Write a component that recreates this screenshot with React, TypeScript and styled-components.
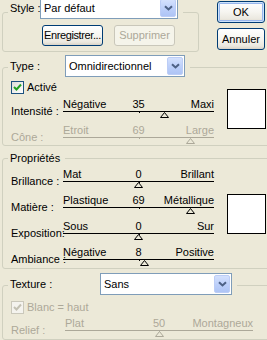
import React from 'react';
import styled, { createGlobalStyle } from 'styled-components';

const GlobalStyle = createGlobalStyle`
  html, body {
    margin: 0;
    padding: 0;
    background: #ece9d8;
  }
`;

const Dialog = styled.div`
  width: 267px;
  height: 340px;
  overflow: hidden;
  background: #ece9d8;
  color: #000;
  font: 11px/13px 'Liberation Sans', Arial, sans-serif;
  display: flex;
  flex-direction: column;
`;

const TopRow = styled.div`
  display: flex;
  align-items: flex-start;
  padding-left: 2px;
`;

const Frame = styled.div<{ $top: number; $width?: number }>`
  box-sizing: border-box;
  margin-top: ${({ $top }) => $top}px;
  border: 1px solid #d0d0bf;
  border-radius: 3px;
  display: flex;
  flex-direction: column;
  ${({ $width }) =>
    $width ? `width: ${$width}px;` : 'margin-left: 2px; margin-right: -10px;'}
`;

const FrameHead = styled.div<{ $lift: number }>`
  align-self: flex-start;
  display: flex;
  align-items: center;
  margin: -${({ $lift }) => $lift}px 0 0 5px;
  padding: 0 5px 0 2px;
  background: #ece9d8;
`;

const HeadLabel = styled.span<{ $w?: number }>`
  ${({ $w }) => ($w ? `width: ${$w}px;` : '')}
  white-space: nowrap;
`;

const Combo = styled.div<{ $w: number }>`
  box-sizing: border-box;
  width: ${({ $w }) => $w}px;
  height: 22px;
  border: 1px solid #7f9db9;
  background: #fff;
  display: flex;
  align-items: center;
  padding-left: 3px;
`;

const ComboText = styled.span`
  flex: 1;
  white-space: nowrap;
`;

const ComboArrow = styled.span`
  box-sizing: border-box;
  width: 16px;
  align-self: stretch;
  margin: 1px;
  border: 1px solid #bccdf6;
  border-radius: 2px;
  background: linear-gradient(180deg, #d4e1fd 0%, #bccffa 55%, #aec4f5 100%);
  display: flex;
  align-items: center;
  justify-content: center;
`;

const ButtonRow = styled.div`
  display: flex;
  gap: 11px;
  margin: 6px 0 0 39px;
  padding-bottom: 5px;
`;

const ButtonCol = styled.div`
  margin: 0 2px 0 auto;
  padding-top: 1px;
  display: flex;
  flex-direction: column;
  gap: 5px;
`;

const XPButton = styled.button<{ $w: number; $h: number; $default?: boolean; $tight?: boolean }>`
  box-sizing: border-box;
  width: ${({ $w }) => $w}px;
  height: ${({ $h }) => $h}px;
  padding: 0;
  font: inherit;
  letter-spacing: ${({ $tight }) => ($tight ? '-0.4px' : 'normal')};
  color: #000;
  white-space: nowrap;
  overflow: hidden;
  border: 1px solid #003c74;
  border-radius: 3px;
  background: linear-gradient(180deg, #ffffff 0%, #f6f5f0 50%, #ebe8df 85%, #d8d3c7 100%);
  box-shadow: ${({ $default }) =>
    $default ? 'inset 0 0 0 1px #cde3fb, inset 0 0 0 2px #98b6ec' : 'none'};

  &:disabled {
    border-color: #c9c7ba;
    color: #aca899;
    background: #f5f4ea;
  }
`;

const Body = styled.div<{ $pad: string }>`
  display: flex;
  align-items: flex-start;
  padding: ${({ $pad }) => $pad};
`;

const Column = styled.div`
  display: flex;
  flex-direction: column;
`;

const CheckRow = styled.label<{ $disabled?: boolean }>`
  display: flex;
  align-items: center;
  gap: 3px;
  height: 13px;
  color: ${({ $disabled }) => ($disabled ? '#aca899' : '#000')};
`;

const CheckBox = styled.span<{ $disabled?: boolean }>`
  box-sizing: border-box;
  width: 13px;
  height: 13px;
  border: 1px solid ${({ $disabled }) => ($disabled ? '#cac8bb' : '#1c5180')};
  background: ${({ $disabled }) =>
    $disabled ? '#f4f3ee' : 'linear-gradient(135deg, #dcdcd7 0%, #ffffff 100%)'};
  display: flex;
  align-items: center;
  justify-content: center;
`;

const SliderList = styled.div<{ $top: number }>`
  display: flex;
  flex-direction: column;
  gap: 6px;
  margin-top: ${({ $top }) => $top}px;
`;

const SliderRow = styled.div<{ $labelW: number; $trackW: number; $disabled?: boolean }>`
  display: grid;
  grid-template-columns: ${({ $labelW, $trackW }) => `${$labelW}px ${$trackW}px`};
  align-items: end;
  height: 20px;
  color: ${({ $disabled }) => ($disabled ? '#aca899' : '#000')};
`;

const RowLabel = styled.span`
  white-space: nowrap;
`;

const Track = styled.div`
  position: relative;
  height: 20px;
`;

const TrackLabels = styled.div`
  position: relative;
  display: grid;
  grid-template-columns: 1fr auto 1fr;
  height: 13px;
  border-bottom: 1px solid currentColor;
  white-space: nowrap;

  &::after {
    content: '';
    position: absolute;
    left: 50%;
    bottom: -2px;
    width: 1px;
    height: 1px;
    background: currentColor;
  }
`;

const MinText = styled.span`
  justify-self: start;
`;

const MaxText = styled.span`
  justify-self: end;
`;

const Thumb = styled.svg`
  position: absolute;
  top: 14px;
`;

const Swatch = styled.div<{ $top: number }>`
  flex-shrink: 0;
  width: 39px;
  height: 40px;
  box-sizing: border-box;
  margin: ${({ $top }) => $top}px 0 0 13px;
  border: 1px solid #000;
  background: #fff;
`;

const Chevron = () => (
  <svg width="9" height="6" viewBox="0 0 9 6">
    <path d="M1 1.2 L4.5 4.5 L8 1.2" fill="none" stroke="#4d6185" strokeWidth="2" />
  </svg>
);

const Tick = ({ color }: { color: string }) => (
  <svg width="11" height="11" viewBox="0 0 11 11">
    <path d="M2 5 L4.5 7.5 L9 2.5" fill="none" stroke={color} strokeWidth="2" />
  </svg>
);

const Dropdown = ({ w, value }: { w: number; value: string }) => (
  <Combo $w={w}>
    <ComboText>{value}</ComboText>
    <ComboArrow>
      <Chevron />
    </ComboArrow>
  </Combo>
);

const Check = ({ label, checked, disabled }: { label: string; checked: boolean; disabled?: boolean }) => (
  <CheckRow $disabled={disabled}>
    <CheckBox $disabled={disabled}>{checked && <Tick color={disabled ? '#c3c1b3' : '#21a121'} />}</CheckBox>
    {label}
  </CheckRow>
);

interface SliderProps {
  label: string;
  min: string;
  max: string;
  value: number;
  from?: number;
  to?: number;
  labelW?: number;
  trackW?: number;
  disabled?: boolean;
}

const Slider = ({ label, min, max, value, from = -100, to = 100, labelW = 52, trackW = 151, disabled }: SliderProps) => {
  const pct = ((value - from) / (to - from)) * 100;
  const stroke = disabled ? '#aca899' : '#000';
  return (
    <SliderRow $labelW={labelW} $trackW={trackW} $disabled={disabled}>
      <RowLabel>{label}</RowLabel>
      <Track>
        <TrackLabels>
          <MinText>{min}</MinText>
          <span>{value}</span>
          <MaxText>{max}</MaxText>
        </TrackLabels>
        <Thumb width="9" height="6" viewBox="0 0 9 6" style={{ left: `calc(${pct}% - 4.5px)` }}>
          <polygon points="4.5,0.5 8.5,5.5 0.5,5.5" fill="#ece9d8" stroke={stroke} strokeWidth="1" />
        </Thumb>
      </Track>
    </SliderRow>
  );
};

export default function App() {
  return (
    <Dialog>
      <GlobalStyle />
      <TopRow>
        <Frame $top={12} $width={197}>
          <FrameHead $lift={16}>
            <HeadLabel $w={30}>Style :</HeadLabel>
            <Dropdown w={138} value="Par défaut" />
          </FrameHead>
          <ButtonRow>
            <XPButton $w={61} $h={21} $tight>
              Enregistrer...
            </XPButton>
            <XPButton $w={61} $h={21} disabled>
              Supprimer
            </XPButton>
          </ButtonRow>
        </Frame>
        <ButtonCol>
          <XPButton $w={48} $h={22} $default>
            OK
          </XPButton>
          <XPButton $w={48} $h={22}>
            Annuler
          </XPButton>
        </ButtonCol>
      </TopRow>

      <Frame $top={15}>
        <FrameHead $lift={13}>
          <HeadLabel $w={55}>Type :</HeadLabel>
          <Dropdown w={120} value="Omnidirectionnel" />
        </FrameHead>
        <Body $pad="4px 0 1px 8px">
          <Column>
            <Check label="Activé" checked />
            <SliderList $top={4}>
              <Slider label="Intensité :" min="Négative" max="Maxi" value={35} />
              <Slider label="Cône :" min="Etroit" max="Large" value={69} disabled />
            </SliderList>
          </Column>
          <Swatch $top={8} />
        </Body>
      </Frame>

      <Frame $top={12}>
        <FrameHead $lift={7}>
          <HeadLabel>Propriétés</HeadLabel>
        </FrameHead>
        <Body $pad="3px 0 2px 8px">
          <SliderList $top={0}>
            <Slider label="Brillance :" min="Mat" max="Brillant" value={0} />
            <Slider label="Matière :" min="Plastique" max="Métallique" value={69} />
            <Slider label="Exposition:" min="Sous" max="Sur" value={0} />
            <Slider label="Ambiance :" min="Négative" max="Positive" value={8} />
          </SliderList>
          <Swatch $top={26} />
        </Body>
      </Frame>

      <Frame $top={16}>
        <FrameHead $lift={13}>
          <HeadLabel $w={90}>Texture :</HeadLabel>
          <Dropdown w={132} value="Sans" />
        </FrameHead>
        <Body $pad="6px 0 2px 8px">
          <Column>
            <Check label="Blanc = haut" checked disabled />
            <SliderList $top={3}>
              <Slider
                label="Relief :"
                min="Plat"
                max="Montagneux"
                value={50}
                from={0}
                to={100}
                labelW={54}
                trackW={188}
                disabled
              />
            </SliderList>
          </Column>
        </Body>
      </Frame>
    </Dialog>
  );
}
